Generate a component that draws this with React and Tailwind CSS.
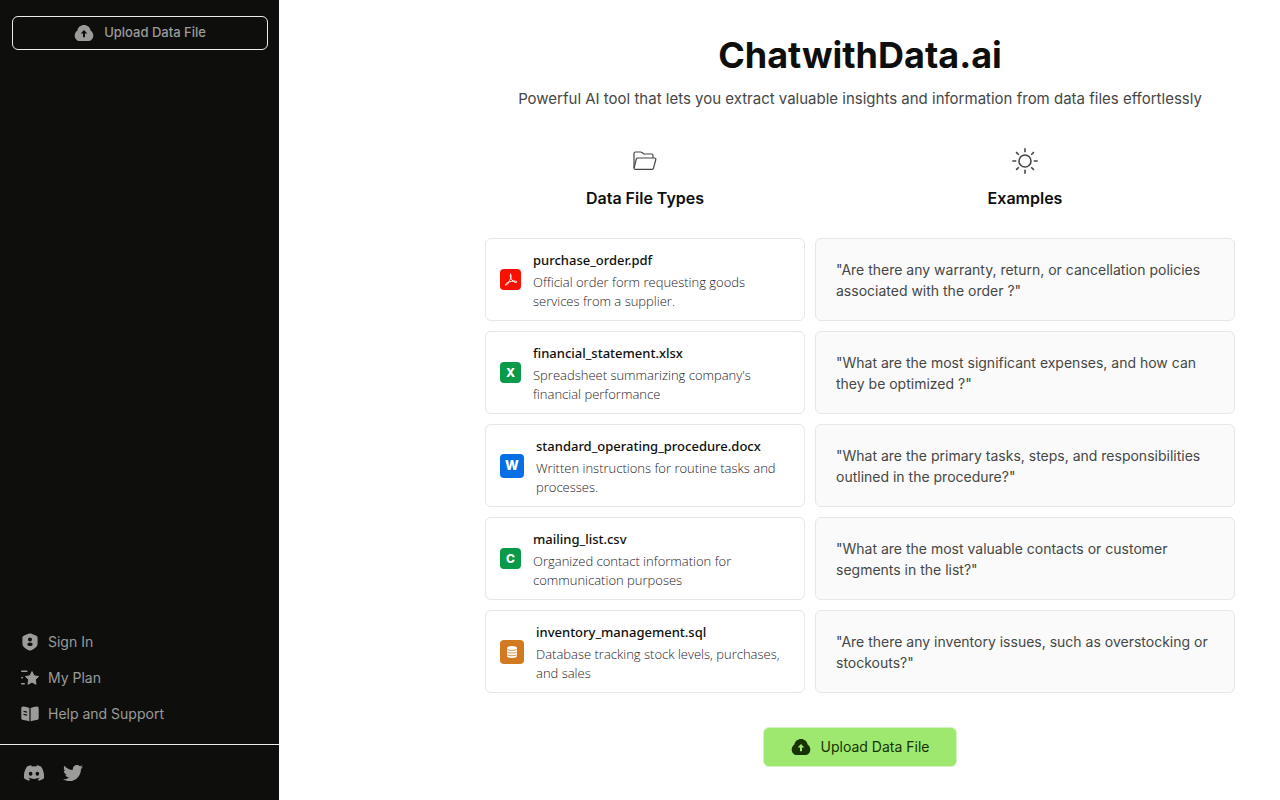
import React from 'react';
import { FaDiscord, FaTwitter } from 'react-icons/fa';

const CloudUploadIcon = ({ className }) => (
  <svg viewBox="0 0 20 18" className={className} fill="currentColor" aria-hidden="true">
    <path
      fillRule="evenodd"
      d="M10 1c3.400 0 6 2.300 6.600 5.400C18.300 7.500 19.300 9.400 19.300 11.400c0 3.300-2.300 5.600-5.400 5.600H6.100C3 17 .7 14.700.7 11.400c0-2 1-3.900 2.700-5C4 3.300 6.600 1 10 1zm0 5L6.700 9.500h2.300V13.200h2V9.500h2.300z"
    />
  </svg>
);

const ShieldUserIcon = () => (
  <svg viewBox="0 0 18 18" className="size-[18px]" fill="currentColor" aria-hidden="true">
    <path
      fillRule="evenodd"
      d="M9 .4c.5 0 1 .2 1.500.4l4.400 1.700c1.100.5 1.700 1.100 1.700 2.300v5.800c0 3.200-3.100 5.300-6.300 6.700-.9.400-1.700.4-2.600 0-3.200-1.400-6.300-3.500-6.300-6.700V4.800c0-1.200.6-1.800 1.700-2.300L7.500.8C8 .6 8.500.4 9 .4zm0 4a2 2 0 1 0 0 4 2 2 0 0 0 0-4zm0 5.100c-1.700 0-2.600.8-2.600 1.800s.9 1.800 2.600 1.800 2.600-.8 2.600-1.800-.9-1.800-2.600-1.800z"
    />
  </svg>
);

const StarListIcon = () => (
  <svg viewBox="0 0 18 18" className="size-[18px]" fill="currentColor" stroke="currentColor" strokeLinejoin="round" aria-hidden="true">
    <path d="M11 2.600l2 4.200 4.500.7-3.200 3.200.7 4.600-4-2.200-4 2.200.7-4.600-3.200-3.200 4.500-.7z" />
    <g stroke="none">
      <rect x="0" y="1.500" width="6.500" height="1.500" rx=".7" />
      <rect x="0" y="8" width="2" height="1.500" rx=".7" />
      <rect x="0" y="14" width="4" height="1.500" rx=".7" />
    </g>
  </svg>
);

const BookIcon = () => (
  <svg viewBox="0 0 18 18" className="size-[18px]" fill="currentColor" aria-hidden="true">
    <path
      fillRule="evenodd"
      d="M2.300 1.500C4.300 1.700 6.500 2.200 8.400 3.100v13.200c-1.700-.8-4-1.100-6-1.400C1 14.700.3 14.200.3 12.900V3.400c0-1.300.8-2 2-1.900zM2.500 5.800v1.300l3.600.7V6.500zm0 3v1.300l3.600.7V9.500z"
    />
    <path d="M15.700 1.500c-2 .2-4.200.7-6.100 1.600v13.200c1.700-.8 4-1.100 6-1.400 1.400-.2 2.100-.7 2.100-2V3.400c0-1.300-.8-2-2-1.900z" />
  </svg>
);

const FolderIcon = () => (
  <svg viewBox="0 0 24 20" className="h-5 w-6" fill="none" stroke="currentColor" strokeWidth="1.200" strokeLinejoin="round" aria-hidden="true">
    <path d="M1 17V2.400C1 1.500 1.600 1 2.400 1h5.200c.6 0 1 .2 1.400.6L11 3h7.500c.9 0 1.500.6 1.500 1.500V7" />
    <path d="M4.600 7H21.600c.9 0 1.400.7 1.200 1.500l-2.300 8.600c-.2.900-.7 1.300-1.500 1.300H2.200C1.300 18.400.9 17.800 1.100 17L3.300 8c.2-.7.600-1 1.300-1z" />
  </svg>
);

const SunIcon = () => (
  <svg viewBox="0 0 26 26" className="size-[26px]" fill="none" stroke="currentColor" strokeWidth="1.600" aria-hidden="true">
    <circle cx="13" cy="13" r="6" />
    <path d="M13 .3v4M13 21.700v4M.3 13h4M21.700 13h4M4.100 4.100l2.700 2.700M19.200 19.200l2.700 2.700M4.100 21.900l2.700-2.700M19.200 6.800l2.700-2.700" />
  </svg>
);

const PdfMark = () => (
  <svg viewBox="0 0 14 14" className="size-[14px]" fill="none" stroke="currentColor" strokeWidth="1" strokeLinecap="round" strokeLinejoin="round" aria-hidden="true">
    <path d="M6.600 1.200c1 1.300.5 4-1 6.500-1.100 2-2.700 4.700-4 4.600-1-.2.200-1.700 2.200-2.700 2-1 5-1.700 7.300-1.500 1.500.1 2.300.9 1.300 1.300-1.300.4-3.300-1-4.500-2.500C6.500 5.200 5.700 2.500 6.600 1.200z" />
  </svg>
);

const DatabaseMark = () => (
  <svg viewBox="0 0 12 14" className="h-[14px] w-3" aria-hidden="true">
    <path fill="currentColor" d="M6 1c2.800 0 5 .8 5 2v8c0 1.200-2.200 2-5 2s-5-.8-5-2V3c0-1.200 2.200-2 5-2z" />
    <path fill="none" stroke="#d37920" strokeWidth=".8" d="M.5 3.800C1.500 5 3.500 5.300 6 5.300s4.500-.3 5.500-1.500M.5 6.500C1.500 7.700 3.500 8 6 8s4.500-.3 5.500-1.500M.5 9.200c1 1.200 3 1.500 5.500 1.500s4.500-.3 5.500-1.500" />
  </svg>
);

const rows = [
  {
    name: 'purchase_order.pdf',
    description: 'Official order form requesting goods services from a supplier.',
    example: '"Are there any warranty, return, or cancellation policies associated with the order ?"',
    mark: <PdfMark />,
    badge: 'size-[21px] bg-[#fa0f00]',
  },
  {
    name: 'financial_statement.xlsx',
    description: "Spreadsheet summarizing company's financial performance",
    example: '"What are the most significant expenses, and how can they be optimized ?"',
    mark: 'X',
    badge: 'size-[21px] bg-[#089949] text-xs',
  },
  {
    name: 'standard_operating_procedure.docx',
    description: 'Written instructions for routine tasks and processes.',
    example: '"What are the primary tasks, steps, and responsibilities outlined in the procedure?"',
    mark: 'W',
    badge: 'size-6 bg-[#066fe6] text-[13px]',
  },
  {
    name: 'mailing_list.csv',
    description: 'Organized contact information for communication purposes',
    example: '"What are the most valuable contacts or customer segments in the list?"',
    mark: 'C',
    badge: 'size-[21px] bg-[#089949] text-xs',
  },
  {
    name: 'inventory_management.sql',
    description: 'Database tracking stock levels, purchases, and sales',
    example: '"Are there any inventory issues, such as overstocking or stockouts?"',
    mark: <DatabaseMark />,
    badge: 'size-6 bg-[#d37920]',
  },
];

const links = [
  { label: 'Sign In', icon: ShieldUserIcon },
  { label: 'My Plan', icon: StarListIcon },
  { label: 'Help and Support', icon: BookIcon },
];

const Sidebar = () => (
  <aside className="flex w-[279px] shrink-0 flex-col bg-[#0e0f0c] text-[#9b9b9a]">
    <div className="px-3 pt-4 pr-[11px]">
      <button type="button" className="flex h-[34px] w-full items-center justify-center gap-2.5 rounded-md border border-[#ececea] text-[13px] font-medium">
        <CloudUploadIcon className="h-[18px] w-5" />
        Upload Data File
      </button>
    </div>

    <nav className="mt-auto flex flex-col px-[21px] pb-3">
      {links.map(({ label, icon: Icon }) => (
        <a key={label} href="#" className="flex h-9 items-center gap-[9px] text-sm">
          <Icon />
          {label}
        </a>
      ))}
    </nav>

    <div className="flex h-14 items-center gap-[18px] border-t border-[#ececea] px-[23px]">
      <a href="#" aria-label="Discord"><FaDiscord size={22} /></a>
      <a href="#" aria-label="Twitter"><FaTwitter size={20} /></a>
    </div>
  </aside>
);

const App = () => (
  <div className="flex min-h-screen bg-white font-['Inter',sans-serif]">
    <Sidebar />

    <main className="min-w-0 flex-1 pl-[161px]">
      <div className="mx-auto flex max-w-[750px] flex-col items-center pt-8">
        <h1 className="text-4xl leading-[46px] font-bold text-[#0e0f0c]">ChatwithData.ai</h1>
        <p className="mt-[11px] text-[15px] leading-5 text-[#454745]">
          Powerful AI tool that lets you extract valuable insights and information from data files effortlessly
        </p>

        {/* Column headings */}
        <div className="mt-[39px] grid w-full grid-cols-[320fr_420fr] gap-2.5 text-[#454745]">
          <div className="flex flex-col items-center gap-3">
            <span className="flex h-[26px] items-center"><FolderIcon /></span>
            <h2 className="text-base leading-6 font-semibold text-[#0e0f0c]">Data File Types</h2>
          </div>
          <div className="flex flex-col items-center gap-3">
            <SunIcon />
            <h2 className="text-base leading-6 font-semibold text-[#0e0f0c]">Examples</h2>
          </div>
        </div>

        {/* File types with a sample question each */}
        <div className="mt-7 flex w-full flex-col gap-2.5">
          {rows.map((row) => (
            <div key={row.name} className="grid grid-cols-[320fr_420fr] gap-2.5">
              <div className="flex min-h-[83px] items-center gap-3 rounded-md border border-[#e5e7eb] px-3.5">
                <span className={`flex shrink-0 items-center justify-center rounded font-extrabold text-white ${row.badge}`}>
                  {row.mark}
                </span>
                <div className="pt-0.5">
                  <h3 className="font-['Noto_Sans',sans-serif] text-[13px] leading-5 font-medium text-[#0e0f0c]">{row.name}</h3>
                  <p className="mt-[3px] font-['Open_Sans',sans-serif] text-[13px] leading-[19px] font-light text-[#1f211f]">{row.description}</p>
                </div>
              </div>
              <div className="flex min-h-[83px] items-center rounded-md border border-[#e5e7eb] bg-[#fafafa] px-5">
                <p className="text-sm leading-[21px] text-[#454745]">{row.example}</p>
              </div>
            </div>
          ))}
        </div>

        <button type="button" className="mt-[34px] flex h-10 items-center gap-2.5 rounded-md border border-[#d5f3c2] bg-[#9fe870] px-[27px] text-sm text-[#163300]">
          <CloudUploadIcon className="h-[18px] w-5" />
          Upload Data File
        </button>
      </div>
    </main>
  </div>
);

export default App;
